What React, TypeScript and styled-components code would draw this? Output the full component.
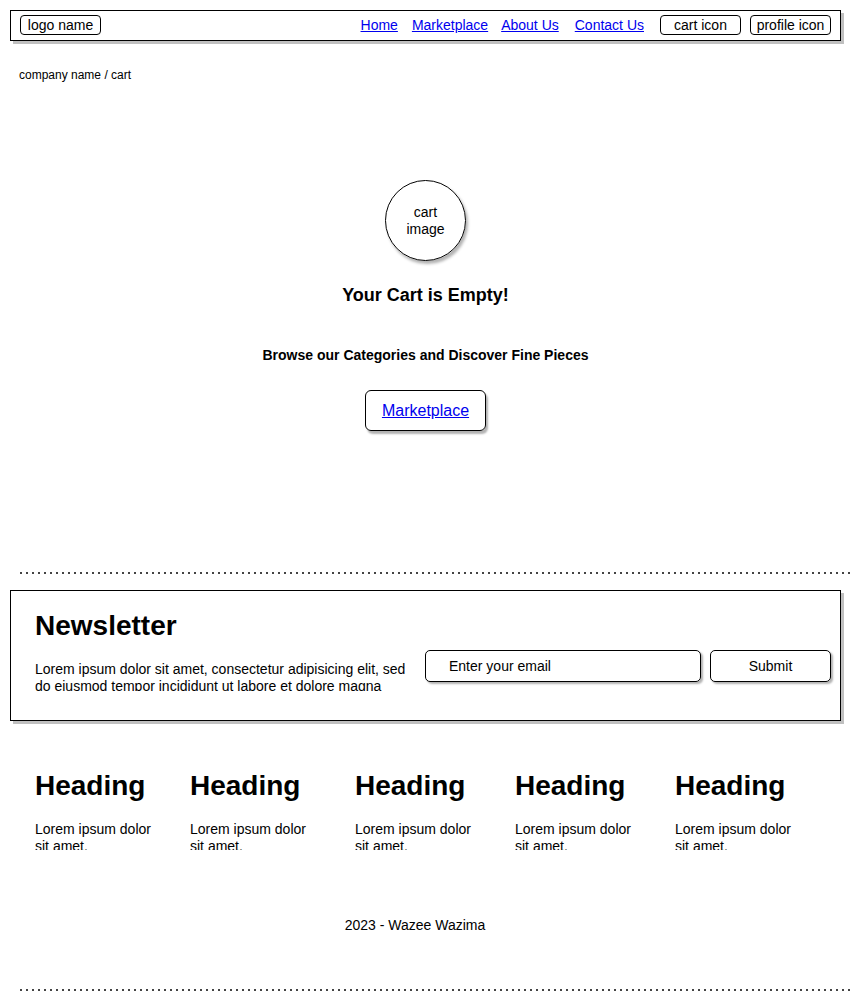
import React from "react";
import styled, { createGlobalStyle } from "styled-components";

const GlobalStyle = createGlobalStyle`
  html, body { margin: 0; padding: 0; background: #ffffff; }
  body { font-family: "Liberation Sans", Arial, sans-serif; color: #000; }
  * { box-sizing: border-box; }
`;

const Page = styled.div`
  width: 850px;
  padding-top: 10px;
  overflow: hidden;
`;

const Header = styled.header`
  margin: 0 9px 0 10px;
  height: 31px;
  border: 1px solid #000;
  box-shadow: 3px 3px 0 #c0c0c0;
  display: flex;
  align-items: center;
  padding: 0 9px;
`;

const Pill = styled.div<{ $w: number; $ml?: number }>`
  width: ${(p) => p.$w}px;
  margin-left: ${(p) => p.$ml ?? 0}px;
  height: 20px;
  border: 1px solid #000;
  border-radius: 4px;
  display: flex;
  align-items: center;
  justify-content: center;
  font-size: 14px;
  line-height: 16px;
  margin-top: -1px;
`;

const Spacer = styled.div`
  flex: 1;
`;

const NavLink = styled.a<{ $ml?: number }>`
  color: #0000ee;
  text-decoration: underline;
  font-size: 14px;
  margin-left: ${(p) => p.$ml ?? 0}px;
  cursor: pointer;
  margin-top: -1px;
`;

const Breadcrumb = styled.div`
  margin-top: 27px;
  padding-left: 19px;
  font-size: 12px;
  line-height: 14px;
`;

const Hero = styled.section`
  display: flex;
  flex-direction: column;
  align-items: center;
  padding-left: 1px;
`;

const Circle = styled.div`
  margin-top: 98px;
  width: 81px;
  height: 81px;
  border-radius: 50%;
  border: 1px solid #000;
  box-shadow: 2px 3px 3px rgba(0, 0, 0, 0.3);
  display: flex;
  align-items: center;
  justify-content: center;
  text-align: center;
  font-size: 14px;
  line-height: 17px;
`;

const Title = styled.h1`
  margin: 23px 0 0;
  font-size: 18px;
  line-height: 22px;
  font-weight: bold;
`;

const Subtitle = styled.h2`
  margin: 41px 0 0;
  font-size: 14px;
  line-height: 17px;
  font-weight: bold;
`;

const CtaButton = styled.a`
  margin-top: 26px;
  width: 121px;
  height: 41px;
  border: 1px solid #000;
  border-radius: 6px;
  box-shadow: 2px 3px 2px rgba(0, 0, 0, 0.3);
  display: flex;
  align-items: center;
  justify-content: center;
  color: #0000ee;
  text-decoration: underline;
  font-size: 16px;
  cursor: pointer;
`;

const Dotted = styled.div<{ $mt: number }>`
  margin-top: ${(p) => p.$mt}px;
  margin-left: 20px;
  height: 2px;
  background-image: linear-gradient(to right, #444 2px, transparent 2px);
  background-size: 6px 2px;
  background-repeat: repeat-x;
`;

const Newsletter = styled.section`
  margin: 16px 9px 0 10px;
  height: 131px;
  border: 1px solid #000;
  box-shadow: 3px 3px 0 #c0c0c0;
  display: flex;
  padding-left: 24px;
`;

const NewsLeft = styled.div`
  width: 390px;
`;

const BigHeading = styled.h3<{ $mt: number }>`
  margin: ${(p) => p.$mt}px 0 0;
  font-size: 28px;
  line-height: 32px;
  font-weight: bold;
`;

const Clipped = styled.p<{ $w: number; $h: number }>`
  margin: 18.5px 0 0;
  width: ${(p) => p.$w}px;
  font-size: 14px;
  line-height: 17px;
  height: ${(p) => p.$h}px;
  overflow: hidden;
`;

const NewsRight = styled.div`
  display: flex;
  align-items: flex-start;
  padding-top: 59px;
`;

const FieldBox = styled.div<{ $w: number; $ml?: number; $center?: boolean }>`
  width: ${(p) => p.$w}px;
  margin-left: ${(p) => p.$ml ?? 0}px;
  height: 32px;
  border: 1px solid #000;
  border-radius: 5px;
  box-shadow: 2px 2px 2px rgba(0, 0, 0, 0.3);
  padding-left: ${(p) => (p.$center ? 0 : 23)}px;
  padding-bottom: 1px;
  display: flex;
  align-items: center;
  justify-content: ${(p) => (p.$center ? "center" : "flex-start")};
  font-size: 14px;
`;

const Columns = styled.section`
  display: flex;
  padding-left: 35px;
`;

const Column = styled.div<{ $w: number }>`
  width: ${(p) => p.$w}px;
  flex-shrink: 0;
`;

const Copyright = styled.div`
  margin-top: 67px;
  text-align: center;
  padding-right: 20px;
  font-size: 14px;
  line-height: 17px;
`;

const columns = [155, 165, 160, 160, 160];

export default function App() {
  return (
    <Page>
      <GlobalStyle />
      <Header>
        <Pill $w={81}>logo name</Pill>
        <Spacer />
        <NavLink>Home</NavLink>
        <NavLink $ml={14}>Marketplace</NavLink>
        <NavLink $ml={13}>About Us</NavLink>
        <NavLink $ml={16}>Contact Us</NavLink>
        <Pill $w={81} $ml={16}>cart icon</Pill>
        <Pill $w={81} $ml={9}>profile icon</Pill>
      </Header>
      <Breadcrumb>company name / cart</Breadcrumb>
      <Hero>
        <Circle>
          cart
          <br />
          image
        </Circle>
        <Title>Your Cart is Empty!</Title>
        <Subtitle>Browse our Categories and Discover Fine Pieces</Subtitle>
        <CtaButton>Marketplace</CtaButton>
      </Hero>
      <Dotted $mt={141} />
      <Newsletter>
        <NewsLeft>
          <BigHeading $mt={19}>Newsletter</BigHeading>
          <Clipped $w={380} $h={30}>
            Lorem ipsum dolor sit amet, consectetur adipisicing elit, sed do
            eiusmod tempor incididunt ut labore et dolore magna aliqua.
          </Clipped>
        </NewsLeft>
        <NewsRight>
          <FieldBox $w={276}>Enter your email</FieldBox>
          <FieldBox $w={121} $ml={9} $center>
            Submit
          </FieldBox>
        </NewsRight>
      </Newsletter>
      <Columns>
        {columns.map((w, i) => (
          <Column key={i} $w={w}>
            <BigHeading $mt={49}>Heading</BigHeading>
            <Clipped $w={125} $h={29}>
              Lorem ipsum dolor sit amet.
            </Clipped>
          </Column>
        ))}
      </Columns>
      <Copyright>2023 - Wazee Wazima</Copyright>
      <Dotted $mt={55} />
    </Page>
  );
}
